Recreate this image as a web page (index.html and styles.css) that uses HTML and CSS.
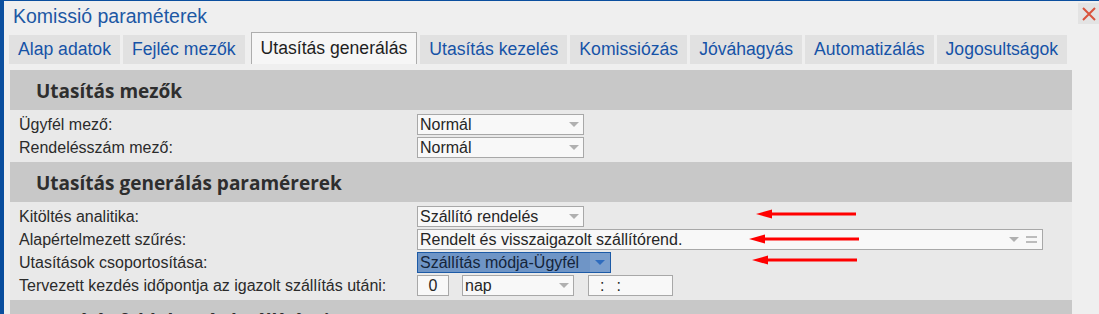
FILE: index.html
```html
<!DOCTYPE html>
<html lang="hu">
<head>
<meta charset="utf-8">
<title>Komissió paraméterek</title>
<link rel="stylesheet" href="styles.css">
</head>
<body>
<div class="window">
  <div class="titlebar">
    <div class="title">Komissió paraméterek</div>
    <div class="close" title="Bezárás">
      <svg width="14" height="14" viewBox="0 0 14 14"><path d="M1 1 L13 13 M13 1 L1 13" stroke="#d9533c" stroke-width="2" fill="none"/></svg>
    </div>
  </div>
  <div class="tabs">
    <div class="tab">Alap adatok</div>
    <div class="tab">Fejléc mezők</div>
    <div class="tab active">Utasítás generálás</div>
    <div class="tab">Utasítás kezelés</div>
    <div class="tab">Komissiózás</div>
    <div class="tab">Jóváhagyás</div>
    <div class="tab">Automatizálás</div>
    <div class="tab">Jogosultságok</div>
  </div>
  <div class="content">
    <div class="section-head">Utasítás mezők</div>
    <div class="rows">
      <div class="row">
        <div class="label">Ügyfél mező:</div>
        <div class="select w167"><span class="val">Normál</span><span class="caret"></span></div>
      </div>
      <div class="row">
        <div class="label">Rendelésszám mező:</div>
        <div class="select w167"><span class="val">Normál</span><span class="caret"></span></div>
      </div>
    </div>
    <div class="section-head">Utasítás generálás paramérerek</div>
    <div class="rows annotated">
      <div class="row">
        <div class="label">Kitöltés analitika:</div>
        <div class="select w167"><span class="val">Szállító rendelés</span><span class="caret"></span></div>
      </div>
      <div class="row">
        <div class="label">Alapértelmezett szűrés:</div>
        <div class="select wide"><span class="val">Rendelt és visszaigazolt szállítórend.</span><span class="caret"></span><span class="menu-ico"></span></div>
      </div>
      <div class="row">
        <div class="label">Utasítások csoportosítása:</div>
        <div class="select selected"><span class="val">Szállítás módja-Ügyfél</span><span class="caret-box"><span class="caret"></span></span></div>
      </div>
      <div class="row">
        <div class="label">Tervezett kezdés időpontja az igazolt szállítás utáni:</div>
        <div class="inputs">
          <div class="numbox">0</div>
          <div class="select w112"><span class="val">nap</span><span class="caret"></span></div>
          <div class="timebox"><span>:</span><span>:</span></div>
        </div>
      </div>
      <svg class="arrow a1" width="100" height="10" viewBox="0 0 100 10"><polygon points="0,5 16,0.5 16,9.5" fill="#f00"/><rect x="14" y="3.5" width="86" height="3" fill="#f00"/></svg>
      <svg class="arrow a2" width="110" height="10" viewBox="0 0 110 10"><polygon points="0,5 16,0.5 16,9.5" fill="#f00"/><rect x="14" y="3.5" width="96" height="3" fill="#f00"/></svg>
      <svg class="arrow a3" width="105" height="10" viewBox="0 0 105 10"><polygon points="0,5 16,0.5 16,9.5" fill="#f00"/><rect x="14" y="3.5" width="91" height="3" fill="#f00"/></svg>
    </div>
    <div class="section-head">Utasítás feldolgozás beállításai</div>
  </div>
</div>
</body>
</html>
```
FILE: styles.css
```css
html, body {
  margin: 0;
  padding: 0;
  background: #efefef;
}
body {
  font-family: "Liberation Sans", Arial, sans-serif;
  color: #2b2b2b;
}
.window {
  height: 314px;
  overflow: hidden;
  border-left: 4px solid #0b4f9f;
  border-top: 1px solid #0b4f9f;
  box-sizing: border-box;
}
.titlebar {
  height: 31px;
  display: flex;
  justify-content: space-between;
  align-items: flex-start;
}
.title {
  padding: 3px 0 0 9px;
  font-size: 19.5px;
  line-height: 24px;
  color: #1d58a4;
}
.close {
  margin-top: 2px;
  width: 21px;
  height: 21px;
  background: #e3e3e3;
  display: flex;
  align-items: center;
  justify-content: center;
}
.tabs {
  display: flex;
  align-items: flex-end;
  gap: 3px;
  padding-left: 5px;
  height: 32px;
}
.tab {
  height: 29px;
  line-height: 29px;
  padding: 0 9px;
  background: #e1e1e1;
  color: #1653a7;
  font-size: 17.6px;
  white-space: nowrap;
}
.tab.active {
  height: 32px;
  line-height: 31px;
  margin-left: 3px;
  background: #f6f6f6;
  color: #1e1e1e;
  border: 1px solid #adadad;
  border-bottom: none;
  box-sizing: border-box;
}
.content {
  margin: 6px 0 0 6px;
  width: 1062px;
}
.section-head {
  height: 40px;
  background: #c8c8c8;
  padding-left: 26px;
  font-family: "Open Sans", "Noto Sans", sans-serif;
  font-weight: 700;
  font-size: 19px;
  line-height: 42px;
  color: #2e2e2e;
  box-sizing: border-box;
}
.rows {
  background: #e9e9e9;
  padding: 4px 0 4px 9px;
  display: flex;
  flex-direction: column;
  gap: 2px;
}
.annotated {
  position: relative;
}
.row {
  display: flex;
  align-items: center;
  height: 21px;
}
.label {
  width: 398px;
  font-size: 16px;
  line-height: 21px;
  color: #2b2b2b;
  white-space: nowrap;
}
.select {
  position: relative;
  height: 21px;
  box-sizing: border-box;
  border: 1px solid #a8a8a8;
  background: #f8f8f8;
  display: flex;
  align-items: center;
  font-size: 16px;
  color: #262626;
}
.select .val {
  flex: 1;
  padding-left: 2px;
  line-height: 19px;
  white-space: nowrap;
  overflow: hidden;
}
.caret {
  width: 0;
  height: 0;
  border-left: 5px solid transparent;
  border-right: 5px solid transparent;
  border-top: 5px solid #b0b0b0;
  margin-right: 4px;
}
.w167 { width: 167px; }
.w112 { width: 112px; }
.wide { width: 626px; }
.wide .caret { margin-right: 7px; }
.menu-ico {
  width: 11px;
  height: 7px;
  border-top: 2px solid #bcbcbc;
  border-bottom: 2px solid #bcbcbc;
  box-sizing: border-box;
  margin-right: 5px;
}
.select.selected {
  width: 194px;
  background: #6f95c6;
  border-color: #1c5aa6;
  color: #14243a;
}
.caret-box {
  width: 20px;
  height: 19px;
  background: #7a9ecc;
  display: flex;
  align-items: center;
  justify-content: center;
}
.caret-box .caret {
  margin-right: 0;
  border-top-color: #2f6cbd;
}
.inputs {
  display: flex;
  align-items: center;
}
.numbox {
  width: 32px;
  height: 21px;
  box-sizing: border-box;
  border: 1px solid #a8a8a8;
  background: #f8f8f8;
  text-align: center;
  font-size: 16px;
  line-height: 19px;
  color: #262626;
  margin-right: 13px;
}
.inputs .select {
  margin-right: 14px;
}
.timebox {
  width: 85px;
  height: 21px;
  box-sizing: border-box;
  border: 1px solid #a8a8a8;
  background: #f8f8f8;
  display: flex;
  gap: 12px;
  padding-left: 11px;
  font-size: 16px;
  line-height: 19px;
  color: #262626;
}
.arrow {
  position: absolute;
}
.a1 { left: 746px; top: 7px; }
.a2 { left: 739px; top: 32px; }
.a3 { left: 742px; top: 53px; }
```
